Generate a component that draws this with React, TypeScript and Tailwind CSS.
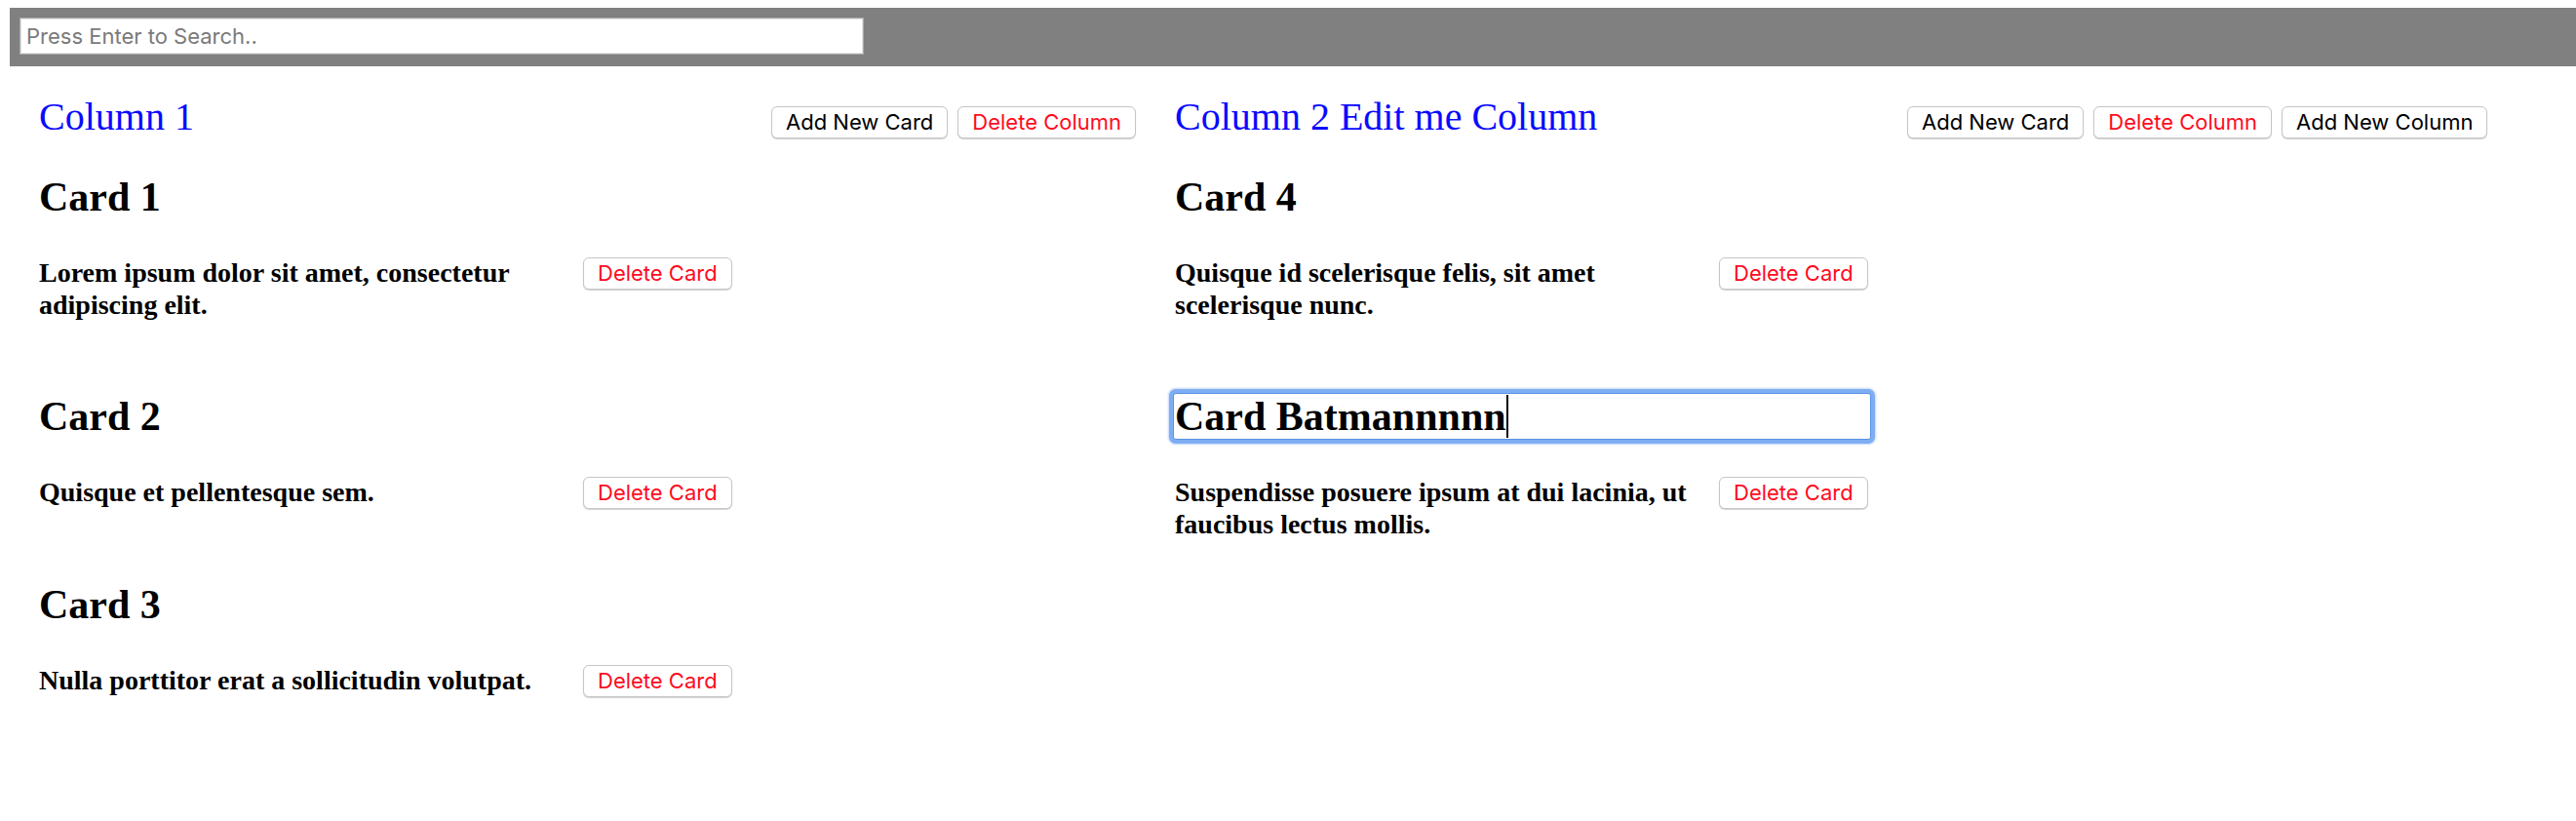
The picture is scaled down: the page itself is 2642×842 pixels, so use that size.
import React from "react";

const btnBase =
  "h-[33px] px-[14px] bg-white border border-[#c6c6c6] rounded-[6px] shadow-[0_1px_1px_rgba(0,0,0,0.18)] text-[22px] leading-[31px] font-['Inter',sans-serif] whitespace-nowrap shrink-0";

function Btn({ label, red, className }: { label: string; red?: boolean; className?: string }) {
  return (
    <button className={`${btnBase} ${red ? "text-[#ff0a1e]" : "text-black"} ${className ?? ""}`}>
      {label}
    </button>
  );
}

type Card = { title: string; body: string; editing?: boolean };

function CardView({ card, first }: { card: Card; first: boolean }) {
  return (
    <div className={first ? "mt-[35px]" : "mt-[74px]"}>
      {card.editing ? (
        <div className="w-[716px] h-[48px] -ml-[2px] border border-[#5a92e6] bg-white shadow-[0_0_0_4px_rgba(120,168,242,0.9),0_0_2px_5px_rgba(120,168,242,0.45)] rounded-[3px] flex items-center pl-[1px]">
          <span className="text-[42px] leading-[48px] font-bold text-black whitespace-nowrap">
            {card.title}
          </span>
          <span className="inline-block w-[2px] h-[44px] bg-black" />
        </div>
      ) : (
        <h2 className="text-[42px] leading-[48px] font-bold text-black">{card.title}</h2>
      )}
      <div className="mt-[37px] flex items-start gap-[12px]">
        <p className="w-[546px] text-[28px] leading-[33px] font-bold text-black">{card.body}</p>
        <Btn label="Delete Card" red className="mt-[1px]" />
      </div>
    </div>
  );
}

function Column({ title, cards, last }: { title: string; cards: Card[]; last?: boolean }) {
  return (
    <div className="w-[1125px] shrink-0">
      <div className="flex items-start gap-[12px]">
        <div className="w-[739px] shrink-0 text-[40px] leading-[46px] text-[#0a0aff] mt-[1px]">{title}</div>
        <div className="flex gap-[10px] mt-[13px]">
          <Btn label="Add New Card" />
          <Btn label="Delete Column" red />
          {last && <Btn label="Add New Column" />}
        </div>
      </div>
      {cards.map((c, i) => (
        <CardView key={i} card={c} first={i === 0} />
      ))}
    </div>
  );
}

export default function App() {
  return (
    <div className="w-[2642px] h-[842px] bg-white font-['Liberation_Serif',serif] overflow-hidden">
      <div className="mt-[8px] ml-[10px] h-[60px] bg-[#808080] p-[10px]">
        <div className="w-[866px] h-[38px] bg-white border border-[#a9a9a9] shadow-[inset_0_0_0_1px_#e4e4e4] flex items-center pl-[6px]">
          <span className="text-[22px] text-[#7a7a7a] font-['Inter',sans-serif]">Press Enter to Search..</span>
        </div>
      </div>
      <div className="flex gap-[40px] px-[40px] pt-[28px]">
        <Column
          title="Column 1"
          cards={[
            { title: "Card 1", body: "Lorem ipsum dolor sit amet, consectetur adipiscing elit." },
            { title: "Card 2", body: "Quisque et pellentesque sem." },
            { title: "Card 3", body: "Nulla porttitor erat a sollicitudin volutpat." },
          ]}
        />
        <Column
          title="Column 2 Edit me Column"
          last
          cards={[
            { title: "Card 4", body: "Quisque id scelerisque felis, sit amet scelerisque nunc." },
            {
              title: "Card Batmannnnn",
              body: "Suspendisse posuere ipsum at dui lacinia, ut faucibus lectus mollis.",
              editing: true,
            },
          ]}
        />
      </div>
    </div>
  );
}
